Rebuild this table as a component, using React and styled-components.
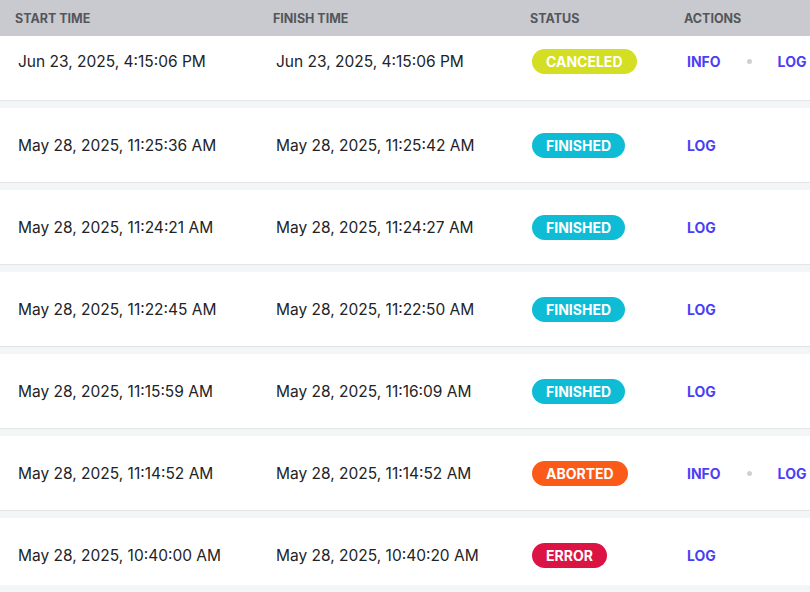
import React from 'react';
import styled, { createGlobalStyle } from 'styled-components';

const GlobalStyle = createGlobalStyle`
  html, body {
    margin: 0;
    padding: 0;
    background: #f3f6f7;
    font-family: Inter, "Noto Sans", sans-serif;
    overflow: hidden;
  }
`;

const Table = styled.div`
  width: 830px;
  height: 585px;
  overflow: hidden;
  display: flex;
  flex-direction: column;
  gap: 7px;
  background: #f3f6f7;
`;

const cols = '258px 257px 154px 1fr';

const HeaderRow = styled.div`
  flex-shrink: 0;
  display: grid;
  grid-template-columns: ${cols};
  height: 36px;
  align-items: center;
  background: #c9cacf;
  margin-bottom: -7px;
`;

const HeadCell = styled.div`
  padding-left: 15px;
  font-size: 12.5px;
  font-weight: 700;
  color: #55565b;
`;

// first row is partly scrolled under the header
const Row = styled.div`
  flex-shrink: 0;
  box-sizing: border-box;
  display: grid;
  grid-template-columns: ${cols};
  align-items: center;
  height: ${p => (p.$clipped ? '65px' : '75px')};
  padding-bottom: ${p => (p.$clipped ? '13px' : '0')};
  background: #fff;
  border-bottom: 1px solid #e2e4e6;
`;

const Cell = styled.div`
  padding-left: ${p => p.$pad || 18}px;
  font-size: 15.5px;
  color: #222326;
  white-space: nowrap;
`;

const badgeColors = {
  CANCELED: '#d4de22',
  FINISHED: '#0fbcd5',
  ABORTED: '#fb5a19',
  ERROR: '#dc1443',
};

const Badge = styled.span`
  display: inline-block;
  padding: 0 14px;
  height: 25px;
  line-height: 25px;
  border-radius: 13px;
  background: ${p => badgeColors[p.$status]};
  color: #fff;
  font-size: 14px;
  font-weight: 700;
`;

const Actions = styled.div`
  display: flex;
  align-items: center;
  gap: 26px;
  padding-left: 18px;
`;

const ActionLink = styled.a`
  color: #4a3ff6;
  font-size: 14px;
  font-weight: 700;
  text-decoration: none;
  cursor: pointer;
`;

const Dot = styled.span`
  width: 5px;
  height: 5px;
  border-radius: 50%;
  background: #cfd0d4;
`;

const rows = [
  { start: 'Jun 23, 2025, 4:15:06 PM', end: 'Jun 23, 2025, 4:15:06 PM', status: 'CANCELED', info: true },
  { start: 'May 28, 2025, 11:25:36 AM', end: 'May 28, 2025, 11:25:42 AM', status: 'FINISHED' },
  { start: 'May 28, 2025, 11:24:21 AM', end: 'May 28, 2025, 11:24:27 AM', status: 'FINISHED' },
  { start: 'May 28, 2025, 11:22:45 AM', end: 'May 28, 2025, 11:22:50 AM', status: 'FINISHED' },
  { start: 'May 28, 2025, 11:15:59 AM', end: 'May 28, 2025, 11:16:09 AM', status: 'FINISHED' },
  { start: 'May 28, 2025, 11:14:52 AM', end: 'May 28, 2025, 11:14:52 AM', status: 'ABORTED', info: true },
  { start: 'May 28, 2025, 10:40:00 AM', end: 'May 28, 2025, 10:40:20 AM', status: 'ERROR' },
];

export default function App() {
  return (
    <>
      <GlobalStyle />
      <Table>
        <HeaderRow>
          <HeadCell>START TIME</HeadCell>
          <HeadCell>FINISH TIME</HeadCell>
          <HeadCell>STATUS</HeadCell>
          <HeadCell>ACTIONS</HeadCell>
        </HeaderRow>
        {rows.map((r, i) => (
          <Row key={i} $clipped={i === 0}>
            <Cell>{r.start}</Cell>
            <Cell>{r.end}</Cell>
            <Cell $pad={17}>
              <Badge $status={r.status}>{r.status}</Badge>
            </Cell>
            <Actions>
              {r.info && (
                <>
                  <ActionLink>INFO</ActionLink>
                  <Dot />
                </>
              )}
              <ActionLink>LOG</ActionLink>
            </Actions>
          </Row>
        ))}
      </Table>
    </>
  );
}
